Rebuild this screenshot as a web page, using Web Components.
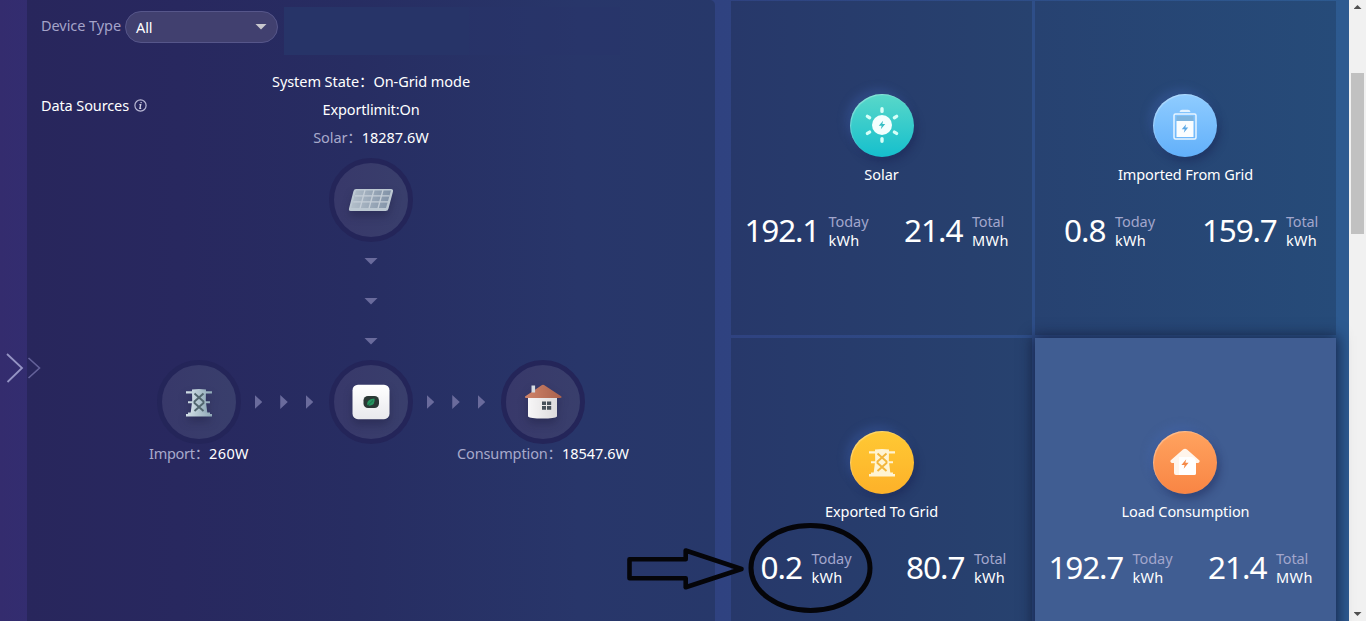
<!DOCTYPE html>
<html lang="en">
<head>
<meta charset="utf-8">
<title>Energy overview</title>
<style>
html,body{margin:0;height:100%;overflow:hidden}
body{font-family:"Noto Sans","Noto Sans CJK SC",sans-serif;font-size:14.5px;color:#fff}
</style>
</head>
<body>
<energy-dashboard></energy-dashboard>
<script>
const define = (name, html, setup) => {
  const t = document.createElement('template');
  t.innerHTML = html;
  customElements.define(name, class extends HTMLElement {
    connectedCallback() {
      if (this.shadowRoot) return;
      const root = this.attachShadow({mode: 'open'});
      root.append(t.content.cloneNode(true));
      if (setup) setup(this, root);
    }
  });
};

const tower = (fill, line) => `
  <path d="M7 1.500Q14 .5 21 1.500L20.800 13L22.500 26H5.500L7.200 13Z" fill="${fill}"/>
  <path d="M1 3.3H27V5.4H1ZM3 13.2H25V15.2H3ZM1 26H27V28.4H1ZM3 24.5H25V27H3Z" fill="${fill}"/>
  <path d="M9.5 5.5L18.5 13.5V15L9.5 23M18.5 5.5L9.5 13.5V15L18.5 23" fill="none" stroke="${line}" stroke-width="1.9"/>`;
const bolt = (x, y, s, c) => `<path transform="translate(${x} ${y}) scale(${s})" d="M1.3-5L-3.8 1H-.4L-1.4 5L3.8-1.2H.4Z" fill="${c}"/>`;

const glyphs = {
  panel: `<svg width="46" height="24" viewBox="0 0 46 24"><defs><linearGradient id="p" x1="0" x2="1"><stop stop-color="#b3bfca"/><stop offset="1" stop-color="#8192a7"/></linearGradient></defs>
    <path d="M8 1H43Q45.5 1 45 3.5L40.5 20.500Q40 23 37.500 23H2.500Q.5 23 1 20.500L5.500 3Q6 1 8 1Z" fill="#bcc8d2"/>
    <path d="M8 2.500H43L38 20H3Z" fill="url(#p)"/><path d="M7 7.800H41.500M5.200 13.800H40M17 2L12 20.500M26 2L21 20.500M35 2L30 20.500" stroke="#c5ced7" stroke-width="1.300"/></svg>`,
  grid: `<svg width="28" height="29" viewBox="0 0 28 29"><defs><linearGradient id="g" x1="0" x2="1"><stop stop-color="#d3e0e7"/><stop offset="1" stop-color="#8fa9b7"/></linearGradient></defs>${tower('url(#g)', '#52666f')}</svg>`,
  inverter: `<svg width="38" height="36" viewBox="0 0 38 36"><defs><linearGradient id="i" x2="0" y2="1"><stop stop-color="#fff"/><stop offset="1" stop-color="#e9e9ed"/></linearGradient></defs>
    <rect x=".5" y=".7" width="37" height="34.500" rx="5.500" fill="url(#i)"/><rect x="11.500" y="12" width="15.500" height="12" rx="4.500" fill="#2b3835"/><path d="M15 20.500Q15 15 22.500 14.500Q23.500 21 17.500 21.800Z" fill="#269660"/><path d="M15.500 21.800L21 16.500" stroke="#1b5f42" stroke-width=".8"/></svg>`,
  home: `<svg width="38" height="36" viewBox="0 0 38 36"><defs><linearGradient id="h" x1="0" x2="1"><stop stop-color="#f7f6f7"/><stop offset="1" stop-color="#dddbdc"/></linearGradient><linearGradient id="r" x1="0" x2="1"><stop stop-color="#d08469"/><stop offset="1" stop-color="#a9614d"/></linearGradient></defs>
    <path d="M4 11H33V32.500Q31 34.500 18.500 34.500Q6 34.500 4 32.500Z" fill="url(#h)"/><path d="M1 12.500L18 1Q19 .3 20 1L37.500 12.500Q38 14 36 14H2.500Q.5 14 1 12.500Z" fill="url(#r)"/><rect x="7.500" y="1.500" width="3.600" height="7" fill="#d6dbe1"/>
    <path d="M18 17.500H22V21H18ZM23 17.500H27.200V21H23ZM18 22H22V25.700H18ZM23 22H27.200V25.700H23Z" fill="#46505a"/></svg>`,
  sun: `<svg width="36" height="38" viewBox="-18 -19 36 38"><circle r="10" fill="#f3fffe"/><g stroke="#d6fff8" stroke-width="3.400" stroke-linecap="round"><path d="M0-16.300V-13.600M0 13.600V16.300M12.400-7.300L14.600-8.600M-12.400-7.300L-14.600-8.600M12.400 7.100L14.600 8.400M-12.400 7.100L-14.600 8.400"/></g>${bolt(0, 0, .85, '#35bfc4')}</svg>`,
  battery: `<svg width="26" height="32" viewBox="0 0 26 32"><path d="M7.500 3Q8 .800 10 .800H16Q18 .800 18.500 3Z" fill="#e2f2ff"/><rect x="2" y="5" width="22" height="25" rx="1.500" fill="none" stroke="#e8f5ff" stroke-width="1.500"/><rect x="4.500" y="7" width="17" height="5" fill="#7fb5df"/><rect x="4.500" y="12" width="17" height="16" fill="#fafdff"/>${bolt(13, 19.5, .85, '#5ba8e6')}</svg>`,
  export: `<svg width="28" height="29" viewBox="0 0 28 29">${tower('#fff4d2', '#f3b63b')}</svg>`,
  house: `<svg width="32" height="28" viewBox="0 0 32 28"><path d="M14 1.500Q16 .1 18 1.500L30.500 12.500Q31 13.300 30 14.500Q29 15.300 27 15V25Q27 27 25 27H7Q5 27 5 25V15Q3 15.300 2 14.500Q1 13.300 1.500 12.500Z" fill="#fff5ec"/><path d="M10 9H22Q27 9 27 15V25Q27 27 25 27H10Z" fill="#fff"/>${bolt(16, 16, .95, '#f58a48')}</svg>`
};

define('state-line', `<style>:host{display:flex;justify-content:center;align-items:baseline;height:28px;line-height:28px;white-space:nowrap}.k{color:#a7a9cb}</style>
  <fit-text class="k"></fit-text><fit-text class="v"></fit-text>`, (el, root) => {
  const k = root.querySelector('.k'), v = root.querySelector('.v');
  if (el.hasAttribute('label')) { k.textContent = el.getAttribute('label'); k.setAttribute('w', el.getAttribute('lw')); } else k.remove();
  v.textContent = el.getAttribute('value'); v.setAttribute('w', el.getAttribute('vw'));
});

define('flow-node', `<style>:host{box-sizing:border-box;display:flex;align-items:center;justify-content:center;width:84px;height:84px;border:5px solid #242559;border-radius:50%;background:linear-gradient(90deg,#38386a,#393f6c) border-box}
  ui-icon{filter:drop-shadow(0 5px 4px rgba(15,15,45,.3))}</style><ui-icon></ui-icon>`,
  (el, root) => root.querySelector('ui-icon').setAttribute('name', el.getAttribute('icon')));

define('flow-arrows', `<style>:host{box-sizing:border-box;display:flex;align-items:center;justify-content:center;gap:18px;width:88px;height:84px;padding-right:2px}
  i{width:7.500px;height:14px;background:#6a6b9c;clip-path:polygon(0 0,100% 50%,0 100%)}
  :host([down]){flex-direction:column;gap:33px;width:84px;height:118px;padding:0}
  :host([down]) i{width:14px;height:7px;clip-path:polygon(0 0,100% 0,50% 100%)}</style><i></i><i></i><i></i>`);

define('device-select', `<style>:host{box-sizing:border-box;display:flex;align-items:center;justify-content:space-between;width:153px;height:32px;padding:0 10px 0 10px;border:1px solid #56568a;border-radius:16px;background:#41406f}
  i{width:12px;height:6px;margin-top:-1px;background:#c9c8ce;clip-path:polygon(0 0,100% 0,50% 100%)}</style><fit-text w="16.500"><slot></slot></fit-text><i></i>`);

define('source-panel', `<style>
  :host{box-sizing:border-box;display:flex;flex-direction:column;height:621px;padding-top:7px;border-radius:0 5px 0 0;background:linear-gradient(90deg,#28265c 0%,#28285f 22%,#272d62 48%,#28366a 80%,#27386a 100%)}
  .bar{display:flex;height:48px}
  .type{display:flex;align-items:center;width:257px;height:40px}
  .type>.l{color:#a4a3c9;margin:-4px 4px 0 14px}
  .a{width:185px;background:#273468}.b{width:151px;background:#28346a;opacity:.5}
  .main{display:grid;grid-template-columns:1fr;padding-top:11.500px}
  .src,.flow{grid-area:1/1}
  .src{display:flex;align-items:center;gap:5px;height:20px;margin:28.500px 0 0 14px;align-self:start}
  .flow{display:flex;flex-direction:column;align-items:center}
  .flow>flow-node{margin-top:7.500px}
  .row{display:flex}
  .caps{display:grid;grid-template-columns:172px 172px 172px;margin-top:-5.500px}
  .caps :last-child{grid-column:3}
  </style>
  <div class="bar"><div class="type"><fit-text class="l" w="80">Device Type</fit-text><device-select>All</device-select></div><div class="a"></div><div class="b"></div></div>
  <div class="main">
    <div class="src"><fit-text w="88">Data Sources</fit-text><svg width="13" height="13" viewBox="0 0 13 13"><circle cx="6.500" cy="6.500" r="5.600" fill="none" stroke="#b9b8d4" stroke-width="1.200"/><path d="M7.300 3.100L7 4.100M5.400 5.700H6.700L5.900 9.400H7.200" fill="none" stroke="#d5d4e6" stroke-width="1.300"/></svg></div>
    <div class="flow">
      <state-line value="System State：On-Grid mode" vw="198"></state-line>
      <state-line value="Exportlimit:On" vw="97"></state-line>
      <state-line label="Solar：" lw="48.500" value="18287.6W" vw="67"></state-line>
      <flow-node icon="panel"></flow-node>
      <flow-arrows down></flow-arrows>
      <div class="row"><flow-node icon="grid"></flow-node><flow-arrows></flow-arrows><flow-node icon="inverter"></flow-node><flow-arrows></flow-arrows><flow-node icon="home"></flow-node></div>
      <div class="caps"><state-line label="Import：" lw="60" value="260W" vw="40"></state-line><state-line label="Consumption：" lw="105" value="18547.6W" vw="67"></state-line></div>
    </div>
  </div>`);

define('energy-stat', `<style>:host{display:flex;align-items:center}.n{font-size:31.500px;line-height:38px}
  .u{display:flex;flex-direction:column;margin:1px 0 0 9.500px}.u fit-text{line-height:19px}.p{color:#a2a6cc}</style>
  <fit-text class="n"></fit-text><div class="u"><fit-text class="p"></fit-text><fit-text class="k"></fit-text></div>`, (el, root) => {
  const put = (s, t, w) => { const e = root.querySelector(s); e.textContent = t; e.setAttribute('w', w); };
  const value = el.getAttribute('value'), period = el.getAttribute('period'), unit = el.getAttribute('unit');
  put('.n', value, value.length === 5 ? 74.5 : value.length === 4 ? 58.5 : 41.5);
  put('.p', period, period === 'Today' ? 40 : 32);
  put('.k', unit, unit === 'kWh' ? 31 : 37);
});

define('energy-card', `<style>
  :host{box-sizing:border-box;display:flex;flex-direction:column;align-items:center;padding-top:92.500px;background:var(--bg)}
  :host([active]){box-shadow:0 0 13px 2px rgba(15,20,50,.75)}
  .disc{display:flex;align-items:center;justify-content:center;width:64px;height:63px;margin-right:var(--nudge,0);border-radius:50%;background:linear-gradient(var(--c1),var(--c2));box-shadow:-4px -5px 10px rgba(68,105,190,.3),3px 5px 9px rgba(24,30,75,.38),inset 1px 1px 1px rgba(255,255,255,.3)}
  .name{margin-top:7.500px;line-height:20px}
  .stats{box-sizing:border-box;display:flex;gap:var(--gap);width:100%;padding-left:var(--pad);margin-top:26.500px}
  </style><div class="disc"><ui-icon></ui-icon></div><fit-text class="name"></fit-text><div class="stats"><slot></slot></div>`, (el, root) => {
  root.querySelector('ui-icon').setAttribute('name', el.getAttribute('icon'));
  const n = root.querySelector('.name'); n.textContent = el.getAttribute('name'); n.setAttribute('w', el.getAttribute('nw'));
});

define('page-scrollbar', `<style>:host{box-sizing:border-box;display:flex;flex-direction:column;align-items:center;width:17px;height:621px;padding:5px 0;background:#f1f1f1}
  i{width:8px;height:4px;background:#505050;clip-path:polygon(50% 0,100% 100%,0 100%)}i:last-child{margin-top:auto;transform:scaleY(-1)}
  b{width:13px;height:161px;margin-top:64px;background:#c1c1c1}</style><i></i><b></b><i></i>`);

define('side-handle', `<style>:host{display:flex;align-items:center;width:41px;height:32px}svg{display:block}</style>
  <svg width="41" height="32" viewBox="0 0 41 32"><path d="M7 2L22 16L7.500 30" fill="none" stroke="#9594c4" stroke-width="1.800"/><path d="M28.500 6L39.500 16L28.500 26" fill="none" stroke="#64629a" stroke-width="1.600"/></svg>`);

define('callout-mark', `<style>:host{display:block;pointer-events:none}svg{display:block}</style>
  <svg width="250" height="94" viewBox="625 521 250 94" fill="none" stroke="#050509" stroke-width="5" stroke-linejoin="round"><path d="M629.500 559.300H685.700V550.500L741.500 569L685.700 587.200V578.300H629.500Z" stroke-width="4.600"/><ellipse cx="810.500" cy="568" rx="59.500" ry="42.500"/></svg>`);

define('energy-dashboard', `<style>
  :host{position:relative;display:grid;grid-template-columns:27px 688px 16px 605px 13px 17px;width:1366px;height:621px;overflow:hidden;background:linear-gradient(90deg,#342c6e 0,#332d70 30px,#2f4280 722px,#2d5a90 1342px)}
  source-panel{grid-column:2}
  .cards{grid-column:4;display:grid;grid-template-columns:301px 301px;grid-template-rows:334px 334px;gap:3px;padding-top:1px;height:620px}
  page-scrollbar{grid-column:6}
  side-handle{position:absolute;left:0;top:352px}
  callout-mark{position:absolute;left:625px;top:521px;z-index:3}
  [active]{z-index:1}
  </style>
  <source-panel></source-panel>
  <div class="cards">
    <energy-card icon="sun" name="Solar" nw="34.500" style="--bg:linear-gradient(90deg,#27386a,#27426f);--c1:#59d8c9;--c2:#15bfcd;--pad:13.500px;--gap:35.500px"><energy-stat value="192.1" period="Today" unit="kWh"></energy-stat><energy-stat value="21.4" period="Total" unit="MWh"></energy-stat></energy-card>
    <energy-card icon="battery" name="Imported From Grid" nw="135" style="--nudge:1px;--bg:linear-gradient(90deg,#274271,#264b79);--c1:#8fccff;--c2:#62b0fa;--pad:29px;--gap:47px"><energy-stat value="0.8" period="Today" unit="kWh"></energy-stat><energy-stat value="159.7" period="Total" unit="kWh"></energy-stat></energy-card>
    <energy-card icon="export" name="Exported To Grid" nw="113" style="--bg:linear-gradient(90deg,#27386a,#27426f);--c1:#ffc934;--c2:#fdb129;--pad:29.500px;--gap:54.500px"><energy-stat value="0.2" period="Today" unit="kWh"></energy-stat><energy-stat value="80.7" period="Total" unit="kWh"></energy-stat></energy-card>
    <energy-card active icon="house" name="Load Consumption" nw="128" style="--nudge:1px;--bg:#405d92;--c1:#ffa35f;--c2:#f98544;--pad:13.500px;--gap:35.500px"><energy-stat value="192.7" period="Today" unit="kWh"></energy-stat><energy-stat value="21.4" period="Total" unit="MWh"></energy-stat></energy-card>
  </div>
  <page-scrollbar></page-scrollbar>
  <side-handle></side-handle>
  <callout-mark></callout-mark>`);

/* Leaf elements are registered after the parents that set their attributes. */
define('ui-icon', `<style>:host{display:block;line-height:0}svg{display:block}</style><span></span>`,
  (el, root) => root.querySelector('span').innerHTML = glyphs[el.getAttribute('name')]);

/* Text set to an exact advance width by adjusting its tracking. */
define('fit-text', `<style>:host{display:block;white-space:nowrap}span{display:inline-block}</style><span><slot></slot></span>`, (el, root) => {
  const span = root.querySelector('span'), w = parseFloat(el.getAttribute('w'));
  const slot = root.querySelector('slot');
  const n = slot.assignedNodes({flatten: true}).map(x => x.textContent).join('').trim().length;
  if (!w || !n) return;
  span.style.letterSpacing = (w - span.getBoundingClientRect().width) / n + 'px';
  el.style.width = w + 'px';
});
</script>
</body>
</html>
